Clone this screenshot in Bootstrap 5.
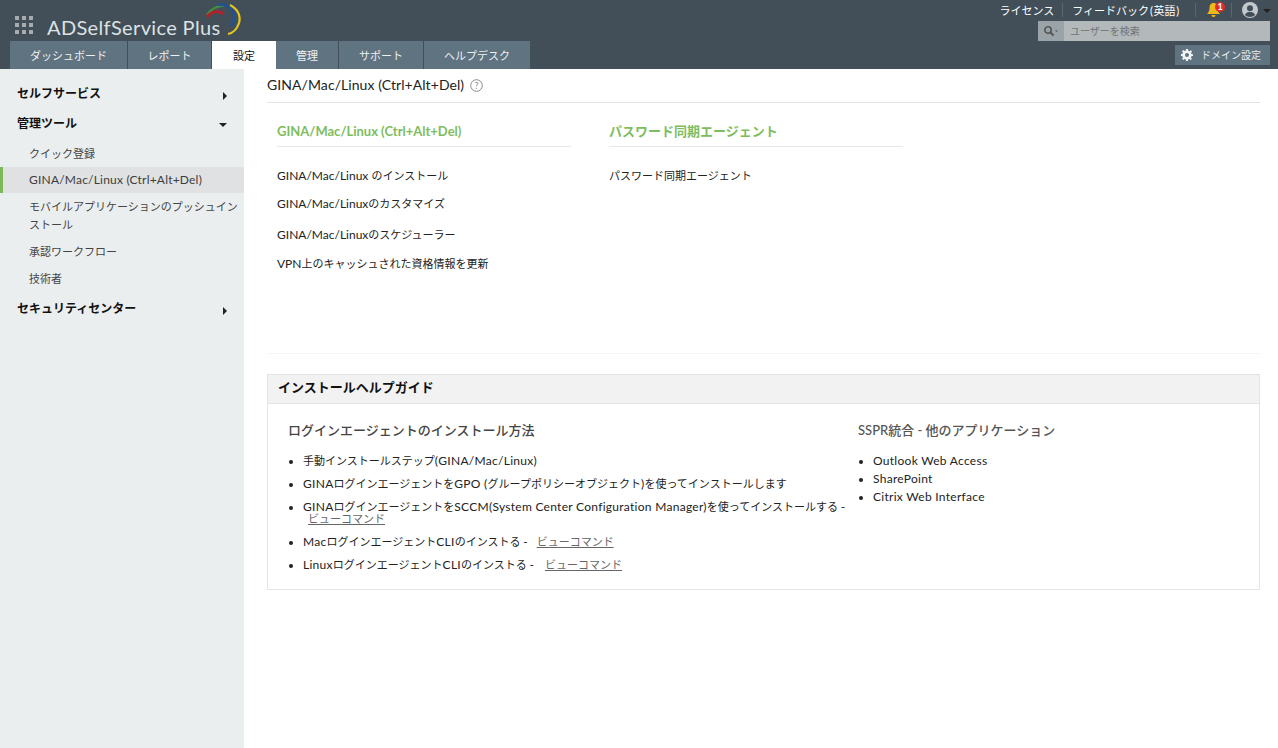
<!DOCTYPE html>
<html lang="ja">
<head>
<meta charset="utf-8">
<title>ADSelfService Plus</title>
<link href="https://cdn.jsdelivr.net/npm/bootstrap@5.3.0/dist/css/bootstrap.min.css" rel="stylesheet">
<style>
body{font-family:Lato,"Noto Sans CJK JP",sans-serif;font-size:11px;color:#222;background:#fff;height:748px;overflow:hidden}
a{color:inherit;text-decoration:none}
.la{font-size:12px}
.top-head{height:69px;background:#424f59}
.brand-row{height:41px;padding-left:15px;padding-top:16px;position:relative}
.brand-name{font-size:20px;line-height:24px;color:#dde1e3;margin-left:14px;margin-top:-1px;white-space:nowrap;letter-spacing:.36px}
.logo-arc{position:absolute;left:205px;top:3px}
.tabs-row{padding-left:10px}
.tab-item{height:28px;background:#5f7380;color:#eef1f2;line-height:30px;text-align:center;font-size:11px;border-right:1px solid #424f59}
.tab-item.is-on{background:#fff;color:#111;border-right:0}
.tw-dash{width:118px}.tw-rep{width:84px}.tw-set{width:64px}.tw-adm{width:63px}.tw-sup{width:85px}.tw-help{width:106px;border-right:0}
.head-right{padding-right:8px;width:280px;flex:none}
.top-links{height:20px;color:#fff;line-height:17px;white-space:nowrap;margin-right:-1px}
.sep{width:1px;height:14px;background:#5b6770;flex:none}
.sep-a{margin-left:8px;margin-right:9px}
.sep-b{margin-left:15px;margin-right:10px}
.sep-c{margin-left:10px;margin-right:10px}
.paren{padding:0 .75px}
.bell-dot{left:9px;top:0;width:10px;height:10px;font-size:9px;line-height:10px;background:#e02b2b}
.user-tri{border-top-color:#b9bfc2;margin-left:5px}
.search-box{width:232px;height:20px;background:#b3b8bb;margin-top:1px}
.search-ico{width:26px;background:#9aa3a8}
.search-ph{color:#6d7478;font-size:10px;padding-left:6px;line-height:20px}
.dom-btn{height:20px;width:95px;background:#5f7380;color:#e8ecee;font-size:10px;line-height:20px;margin-top:4px;padding-bottom:1px}
.gear-ico{margin-left:6px;margin-right:8px}
.side-col{width:244px;background:#ebeeef;height:679px;padding-top:10px;flex:none}
.side-head{height:30px;font-size:12px;font-weight:700;color:#111;padding-left:17px;padding-right:17px}
.side-link{font-size:11px;color:#444;padding-left:29px;padding-right:4px;line-height:18px}
.side-link .la{letter-spacing:.2px}
.side-link.h29{height:28px;line-height:29px}
.side-link.h26{height:26px;line-height:26px}
.side-link.h28{height:27px;line-height:27px}
.side-link.on{background:#e0e1e2;border-left:3px solid #7cb85a;padding-left:26px;color:#3d3d3d}
.side-link.wrap2{height:46px;padding-top:5px}
.side-gap{height:2px}
.tri-r{width:0;height:0;border-left:4px solid #222;border-top:4px solid transparent;border-bottom:4px solid transparent;margin-top:4px}
.tri-d{width:0;height:0;border-top:4px solid #222;border-left:4px solid transparent;border-right:4px solid transparent;margin-top:2px}
.main-col{padding:0 18px 0 23px;min-width:0}
.page-title{height:34px;border-bottom:1px solid #e3e3e3;font-size:14px;line-height:32px;color:#222;letter-spacing:.07px}
.cols{height:251px;border-bottom:1px solid #f5f5f5;padding-left:10px;gap:38px}
.group-box{width:294px}
.group-title{height:44px;border-bottom:1px solid #e8e8e8;color:#7ebd5e;font-size:13px;font-weight:700;line-height:57px}
.group-link{display:block;font-size:11px;color:#222;line-height:18px;margin-bottom:11px}
.group-link:nth-child(1){margin-bottom:10px}
.group-link:nth-child(2){margin-bottom:13px}
.group-links{padding-top:20px}
.guide{margin-top:20px;border:1px solid #e4e4e4;height:216px}
.guide-head{height:29px;background:#f2f2f2;border-bottom:1px solid #e4e4e4;font-size:13px;font-weight:700;line-height:25px;padding-left:10px;color:#111}
.guide-col{padding-top:17px}
.guide-left{width:590px;padding-left:20px;flex:none}
.guide-title{font-size:13px;font-weight:500;color:#444;line-height:18px;margin-bottom:16px}
.guide-title.sspr{color:#555}
.guide-list{margin:0;padding-left:15px;font-size:11px;color:#222;line-height:12px;width:564px}
.guide-list .la{letter-spacing:.28px}
.guide-list li{margin-bottom:11px}
.guide-list a{color:#666;text-decoration:underline;margin-left:5px}
.guide-list a.mac-link{margin-left:3px}
.guide-list.tight{padding-left:15px;width:auto}
.guide-list.tight li{margin-bottom:6px}
.faint-help{margin-left:6px;vertical-align:-2px}
</style>
</head>
<body>
<header class="top-head d-flex justify-content-between">
  <div class="d-flex flex-column">
    <div class="brand-row d-flex align-items-start">
      <svg width="18" height="18" viewBox="0 0 18 18" fill="#a5abaf"><rect x="0" y="0" width="4" height="4"/><rect x="7" y="0" width="4" height="4"/><rect x="14" y="0" width="4" height="4"/><rect x="0" y="7" width="4" height="4"/><rect x="7" y="7" width="4" height="4"/><rect x="14" y="7" width="4" height="4"/><rect x="0" y="14" width="4" height="4"/><rect x="7" y="14" width="4" height="4"/><rect x="14" y="14" width="4" height="4"/></svg>
      <span class="brand-name">ADSelfService Plus</span>
      <svg class="logo-arc" width="37" height="35" viewBox="0 0 37 35" fill="none"><path d="M2 12C6 6 11 3 19 2.500" stroke="#3f8f3f" stroke-width="2.500"/><path d="M2 14C7 8 13 7 18 11" stroke="#b3202c" stroke-width="3"/><path d="M13 1.500C22 .500 30 6 29 15C29 18 28 20 26 23" stroke="#23508f" stroke-width="2.800"/><path d="M25 2C33 6 36 13 34 20C32 26 28 30 23 31" stroke="#e3c51f" stroke-width="2.200"/></svg>
    </div>
    <nav class="tabs-row d-flex">
      <a class="tab-item tw-dash" href="#">ダッシュボード</a>
      <a class="tab-item tw-rep" href="#">レポート</a>
      <a class="tab-item tw-set is-on" href="#">設定</a>
      <a class="tab-item tw-adm" href="#">管理</a>
      <a class="tab-item tw-sup" href="#">サポート</a>
      <a class="tab-item tw-help" href="#">ヘルプデスク</a>
    </nav>
  </div>
  <div class="head-right d-flex flex-column align-items-end">
    <div class="top-links d-flex align-items-center">
      <a href="#">ライセンス</a><span class="sep sep-a"></span>
      <a href="#">フィードバック<span class="paren">(</span>英語<span class="paren">)</span></a><span class="sep sep-b"></span>
      <span class="position-relative d-inline-flex">
        <svg width="15" height="16" viewBox="0 0 15 16"><path d="M7.500 1C4.500 1 3.500 3.500 3.500 6C3.500 9 2.500 10.500 1 12H14C12.500 10.500 11.500 9 11.500 6C11.500 3.500 10.500 1 7.500 1Z" fill="#eeb71a"/><path d="M5.500 13H9.500C9.500 14.500 8.500 15 7.500 15C6.500 15 5.500 14.500 5.500 13Z" fill="#eeb71a"/></svg>
        <span class="bell-dot position-absolute text-white fw-bold rounded-circle text-center">1</span>
      </span>
      <span class="sep sep-c"></span>
      <svg width="16" height="16" viewBox="0 0 16 16"><circle cx="8" cy="8" r="8" fill="#c3c8cb"/><circle cx="8" cy="6.200" r="3" fill="#424f59"/><path d="M2.800 13C4 10.500 6 10 8 10C10 10 12 10.500 13.200 13C10.500 15.500 5.500 15.500 2.800 13Z" fill="#424f59"/></svg>
      <span class="tri-d user-tri"></span>
    </div>
    <div class="search-box d-flex">
      <div class="search-ico d-flex align-items-center justify-content-center">
        <svg width="16" height="12" viewBox="0 0 16 12" fill="none"><circle cx="5" cy="5" r="3.200" stroke="#555" stroke-width="1.600"/><path d="M7.500 7.500L10.500 10.500" stroke="#555" stroke-width="2"/><path d="M12 5.500H15L13.500 7Z" fill="#555"/></svg>
      </div>
      <div class="search-ph">ユーザーを検索</div>
    </div>
    <a class="dom-btn d-flex align-items-center" href="#">
      <svg class="gear-ico" width="12" height="12" viewBox="0 0 12 12"><path d="M5 0H7L7.300 1.700L8.600 2.200L10 1.200L11 2.500L10 3.900L10.400 5L12 5.300V6.900L10.400 7.200L9.900 8.500L10.900 9.900L9.700 11L8.300 10L7.200 10.500L6.900 12H5.100L4.800 10.500L3.600 10L2.200 11L1 9.800L2 8.400L1.500 7.200L0 6.900V5.100L1.500 4.800L2 3.600L1 2.200L2.200 1L3.600 2L4.800 1.500Z M6 4A2 2 0 1 0 6 8A2 2 0 1 0 6 4Z" fill="#f0f2f3" fill-rule="evenodd"/></svg>
      ドメイン設定
    </a>
  </div>
</header>
<div class="d-flex">
  <aside class="side-col">
    <div class="side-head d-flex justify-content-between align-items-center">セルフサービス<span class="tri-r"></span></div>
    <div class="side-head d-flex justify-content-between align-items-center">管理ツール<span class="tri-d"></span></div>
    <a class="side-link h29 d-block" href="#">クイック登録</a>
    <a class="side-link h26 d-block on" href="#"><span class="la">GINA/Mac/Linux (Ctrl+Alt+Del)</span></a>
    <a class="side-link wrap2 d-block" href="#">モバイルアプリケーションのプッシュインストール</a>
    <a class="side-link h26 d-block" href="#">承認ワークフロー</a>
    <a class="side-link h28 d-block" href="#">技術者</a>
    <div class="side-gap"></div>
    <div class="side-head d-flex justify-content-between align-items-center">セキュリティセンター<span class="tri-r"></span></div>
  </aside>
  <main class="main-col flex-grow-1">
    <div class="page-title">GINA/Mac/Linux (Ctrl+Alt+Del)<svg class="faint-help" width="13" height="13" viewBox="0 0 13 13" fill="none"><circle cx="6.500" cy="6.500" r="5.800" stroke="#8a8a8a"/><text x="6.500" y="10" font-size="9" text-anchor="middle" fill="#8a8a8a">?</text></svg></div>
    <div class="cols d-flex">
      <div class="group-box">
        <div class="group-title">GINA/Mac/Linux (Ctrl+Alt+Del)</div>
        <div class="group-links">
          <a class="group-link" href="#"><span class="la">GINA/Mac/Linux </span>のインストール</a>
          <a class="group-link" href="#"><span class="la">GINA/Mac/Linux</span>のカスタマイズ</a>
          <a class="group-link" href="#"><span class="la">GINA/Mac/Linux</span>のスケジューラー</a>
          <a class="group-link" href="#"><span class="la">VPN</span>上のキャッシュされた資格情報を更新</a>
        </div>
      </div>
      <div class="group-box">
        <div class="group-title">パスワード同期エージェント</div>
        <div class="group-links">
          <a class="group-link" href="#">パスワード同期エージェント</a>
        </div>
      </div>
    </div>
    <section class="guide">
      <div class="guide-head">インストールヘルプガイド</div>
      <div class="d-flex">
        <div class="guide-col guide-left">
          <div class="guide-title">ログインエージェントのインストール方法</div>
          <ul class="guide-list">
            <li>手動インストールステップ<span class="la">(GINA/Mac/Linux)</span></li>
            <li><span class="la">GINA</span>ログインエージェントを<span class="la">GPO (</span>グループポリシーオブジェクト<span class="la">)</span>を使ってインストールします</li>
            <li><span class="la">GINA</span>ログインエージェントを<span class="la">SCCM(System Center Configuration Manager)</span>を使ってインストールする <span class="la">-</span> <a href="#">ビューコマンド</a></li>
            <li><span class="la">Mac</span>ログインエージェント<span class="la">CLI</span>のインストる <span class="la">-</span> &nbsp;<a class="mac-link" href="#">ビューコマンド</a></li>
            <li><span class="la">Linux</span>ログインエージェント<span class="la">CLI</span>のインストる <span class="la">-</span> &nbsp;<a href="#">ビューコマンド</a></li>
          </ul>
        </div>
        <div class="guide-col">
          <div class="guide-title sspr">SSPR統合 - 他のアプリケーション</div>
          <ul class="guide-list tight">
            <li><span class="la">Outlook Web Access</span></li>
            <li><span class="la">SharePoint</span></li>
            <li><span class="la">Citrix Web Interface</span></li>
          </ul>
        </div>
      </div>
    </section>
  </main>
</div>
<script src="https://cdn.jsdelivr.net/npm/bootstrap@5.3.0/dist/js/bootstrap.bundle.min.js"></script>
</body>
</html>
